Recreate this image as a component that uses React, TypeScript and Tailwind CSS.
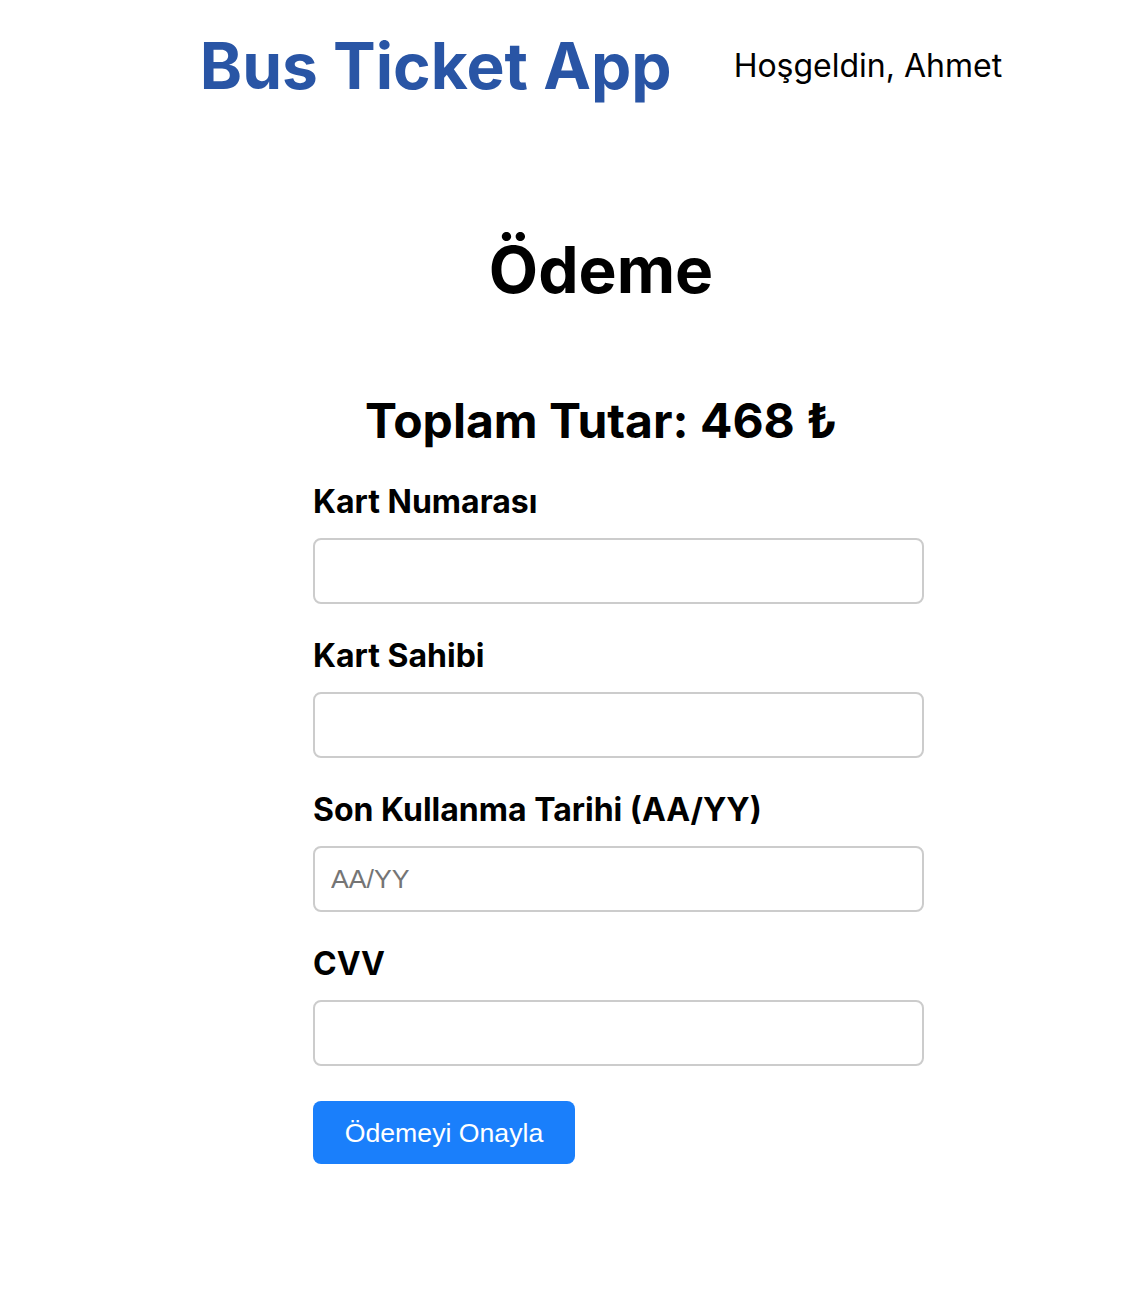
import React from "react";

const fields = [
  { label: "Kart Numarası", placeholder: "" },
  { label: "Kart Sahibi", placeholder: "" },
  { label: "Son Kullanma Tarihi (AA/YY)", placeholder: "AA/YY" },
  { label: "CVV", placeholder: "" },
];

export default function App() {
  return (
    <div className="min-h-[1298px] w-full bg-white text-black font-['Inter','Noto_Sans',sans-serif]">
      <header className="h-[132px] flex items-center justify-center gap-[62px] pl-[56px]">
        <h1 className="text-[64px] leading-none font-bold text-[#2955a5]">Bus Ticket App</h1>
        <span className="text-[32px] leading-none">Hoşgeldin, Ahmet</span>
      </header>

      <main className="flex flex-col">
        <h2 className="mt-[106px] pl-[56px] text-center text-[64px] leading-none font-bold">Ödeme</h2>
        <h3 className="mt-[95px] pl-[56px] text-center text-[48px] leading-none font-bold">
          Toplam Tutar: 468 ₺
        </h3>

        <form className="ml-[313px] mt-[40px] w-[611px] flex flex-col" onSubmit={(e) => e.preventDefault()}>
          {fields.map((f) => (
            <div key={f.label} className="flex flex-col mb-[35px] last:mb-[29px]">
              <label className="text-[32px] leading-[34px] font-bold mb-[19px]">{f.label}</label>
              <input
                type="text"
                placeholder={f.placeholder}
                className="h-[66px] w-full rounded-[8px] border-2 border-[#cccccc] pl-[16px] text-[26.67px] font-['Liberation_Sans',Arial,sans-serif] placeholder:text-[#757575] outline-none"
              />
            </div>
          ))}
          <button
            type="submit"
            className="w-[262px] h-[63px] rounded-[8px] bg-[#1a7ffb] text-white text-[26.67px] font-['Liberation_Sans',Arial,sans-serif]"
          >
            Ödemeyi Onayla
          </button>
        </form>
      </main>
    </div>
  );
}
